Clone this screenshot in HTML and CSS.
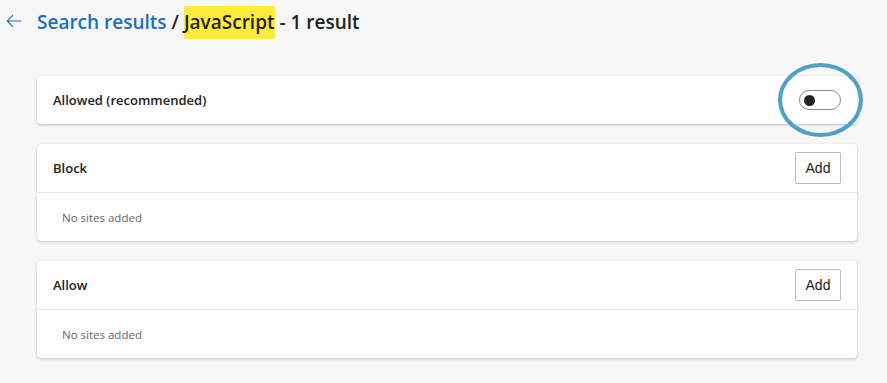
FILE: index.html
```html
<!DOCTYPE html>
<html lang="en">
<head>
  <meta charset="UTF-8">
  <title>Search results - JavaScript</title>
  <link rel="stylesheet" href="styles.css">
</head>
<body>
  <div class="page">
    <header class="header">
      <button type="button" class="back-btn" aria-label="Back">
        <svg width="16" height="14" viewBox="0 0 16 14"><path d="M15.5 7H1.2M7 1.2L1.2 7L7 12.8" fill="none" stroke="#1a6fc4" stroke-width="1.1"/></svg>
      </button>
      <h1 class="title">
        <span class="crumb">Search results</span> / <mark class="hl">JavaScript</mark> - 1 result
      </h1>
    </header>

    <section class="card card-toggle">
      <div class="card-row">
        <span class="label">Allowed (recommended)</span>
        <span class="toggle"><span class="knob"></span></span>
      </div>
      <span class="annotation"></span>
    </section>

    <section class="card">
      <div class="card-row card-head">
        <span class="label">Block</span>
        <button type="button" class="add-btn">Add</button>
      </div>
      <div class="empty">No sites added</div>
    </section>

    <section class="card">
      <div class="card-row card-head">
        <span class="label">Allow</span>
        <button type="button" class="add-btn">Add</button>
      </div>
      <div class="empty">No sites added</div>
    </section>
  </div>
</body>
</html>
```

FILE: styles.css
```css
body {
  margin: 0;
  background: #f7f7f7;
  font-family: "Segoe UI", "Open Sans", "Noto Sans", sans-serif;
  color: #1b1b1b;
}

.page {
  padding: 0 30px 20px 37px;
  display: flex;
  flex-direction: column;
  gap: 20px;
}

.header {
  display: flex;
  align-items: center;
  height: 44px;
  margin-bottom: 12px;
  position: relative;
}

.back-btn {
  position: absolute;
  left: -31px;
  top: 14px;
  border: none;
  background: none;
  padding: 0;
  width: 16px;
  height: 14px;
  cursor: pointer;
}

.title {
  margin: 0;
  font-size: 19px;
  font-weight: 600;
  color: #222;
}

.crumb {
  color: #1a6fc4;
}

.hl {
  background: #ffeb3b;
  color: #222;
  padding: 3px 0 4px;
}

.card {
  background: #fff;
  border-radius: 4px;
  box-shadow: 0 1px 3px rgba(0, 0, 0, 0.22);
  position: relative;
}

.card-row {
  display: flex;
  align-items: center;
  justify-content: space-between;
  height: 48px;
  padding: 0 16px;
}

.card-head {
  border-bottom: 1px solid #e6e6e6;
}

.label {
  font-size: 13px;
  font-weight: 600;
  color: #222;
}

.toggle {
  width: 32px;
  height: 18px;
  border: 1px solid #8a8a8a;
  border-radius: 10px;
  display: flex;
  align-items: center;
  padding: 0 4px;
}

.knob {
  width: 11px;
  height: 11px;
  border-radius: 50%;
  background: #222;
}

.annotation {
  position: absolute;
  right: -6px;
  top: -13px;
  width: 77px;
  height: 66px;
  border: 4px solid #529fcb;
  border-radius: 50%;
}

.add-btn {
  font-family: "Liberation Sans", Arial, sans-serif;
  font-size: 14px;
  color: #222;
  background: #fff;
  border: 1px solid #bdbdbd;
  border-radius: 2px;
  width: 46px;
  height: 32px;
  padding: 0;
  cursor: pointer;
}

.empty {
  height: 48px;
  display: flex;
  align-items: center;
  padding-left: 25px;
  font-size: 11.5px;
  color: #666;
}
```
